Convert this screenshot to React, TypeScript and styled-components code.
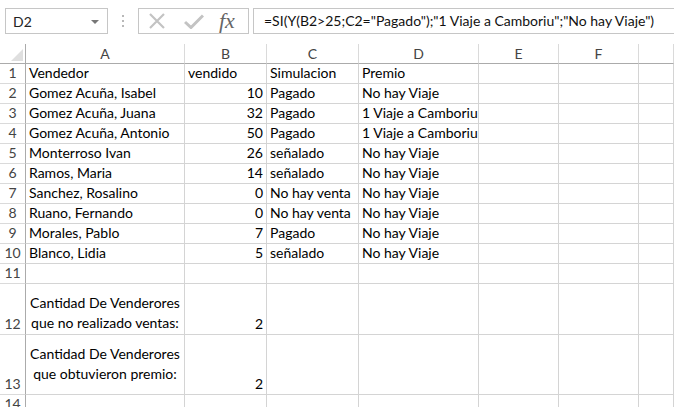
import React from 'react';
import styled, { createGlobalStyle } from 'styled-components';

const GlobalStyle = createGlobalStyle`
  html, body {
    margin: 0;
    padding: 0;
    background: #fff;
  }
  body {
    font-family: Lato, "Liberation Sans", sans-serif;
    overflow: hidden;
  }
`;

const FORMULA = '=SI(Y(B2>25;C2="Pagado");"1 Viaje a Camboriu";"No hay Viaje")';

const COLUMNS = ['A', 'B', 'C', 'D', 'E', 'F', ''];

type Row = [string, string, string, string];

const ROWS: Row[] = [
  ['Vendedor', 'vendido', 'Simulacion', 'Premio'],
  ['Gomez Acuña, Isabel', '10', 'Pagado', 'No hay Viaje'],
  ['Gomez Acuña, Juana', '32', 'Pagado', '1 Viaje a Camboriu'],
  ['Gomez Acuña, Antonio', '50', 'Pagado', '1 Viaje a Camboriu'],
  ['Monterroso Ivan', '26', 'señalado', 'No hay Viaje'],
  ['Ramos, Maria', '14', 'señalado', 'No hay Viaje'],
  ['Sanchez, Rosalino', '0', 'No hay venta', 'No hay Viaje'],
  ['Ruano, Fernando', '0', 'No hay venta', 'No hay Viaje'],
  ['Morales, Pablo', '7', 'Pagado', 'No hay Viaje'],
  ['Blanco, Lidia', '5', 'señalado', 'No hay Viaje'],
  ['', '', '', ''],
];

const SUMMARY = [
  { n: 12, label: ['Cantidad De Venderores', 'que no realizado ventas:'], value: '2', valign: 'end' as const },
  { n: 13, label: ['Cantidad De Venderores', 'que obtuvieron premio:'], value: '2', valign: 'center' as const },
];

function App() {
  return (
    <StyledPage>
      <GlobalStyle />
      <StyledFormulaBar>
        <StyledNameBox>
          <span>D2</span>
          <StyledCaret />
        </StyledNameBox>
        <StyledGrip>
          <i />
          <i />
          <i />
        </StyledGrip>
        <StyledFxGroup>
          <svg width="18" height="16" viewBox="0 0 18 16">
            <path d="M2 1 L16 15 M16 1 L2 15" stroke="#c3c3c3" strokeWidth="2.2" fill="none" />
          </svg>
          <svg width="20" height="15" viewBox="0 0 20 15">
            <path d="M1 8 L7 13.5 L19 1.5" stroke="#c3c3c3" strokeWidth="3" fill="none" />
          </svg>
          <StyledFx>fx</StyledFx>
        </StyledFxGroup>
        <StyledFormulaInput>{FORMULA}</StyledFormulaInput>
      </StyledFormulaBar>

      <StyledSheet>
        <StyledCorner>
          <svg width="12" height="12" viewBox="0 0 12 12">
            <path d="M12 0 L12 12 L0 12 Z" fill="#dfdfdf" />
          </svg>
        </StyledCorner>
        {COLUMNS.map((c, i) => (
          <StyledColHead key={i}>{c}</StyledColHead>
        ))}

        {ROWS.map((row, i) => (
          <React.Fragment key={i}>
            <StyledRowHead>{i + 1}</StyledRowHead>
            <StyledCell>{row[0]}</StyledCell>
            <StyledCell $align={i === 0 ? 'left' : 'right'}>{row[1]}</StyledCell>
            <StyledCell>{row[2]}</StyledCell>
            <StyledCell>{row[3]}</StyledCell>
            <StyledCell />
            <StyledCell />
            <StyledCell />
          </React.Fragment>
        ))}

        {SUMMARY.map((s) => (
          <React.Fragment key={s.n}>
            <StyledRowHead>{s.n}</StyledRowHead>
            <StyledCell $valign={s.valign}>
              <StyledLabel>
                {s.label.map((l) => (
                  <div key={l}>{l}</div>
                ))}
              </StyledLabel>
            </StyledCell>
            <StyledCell $align="right">{s.value}</StyledCell>
            <StyledCell />
            <StyledCell />
            <StyledCell />
            <StyledCell />
            <StyledCell />
          </React.Fragment>
        ))}

        <StyledRowHead>14</StyledRowHead>
        {COLUMNS.map((c, i) => (
          <StyledCell key={i} />
        ))}
      </StyledSheet>
    </StyledPage>
  );
}

const StyledPage = styled.div`
  width: 674px;
  height: 407px;
  overflow: hidden;
  background: #fff;
`;

const StyledFormulaBar = styled.div`
  display: flex;
  align-items: center;
  height: 34px;
  padding: 8px 0 0 5px;
  box-sizing: border-box;
`;

const StyledNameBox = styled.div`
  display: flex;
  align-items: center;
  justify-content: space-between;
  width: 103px;
  height: 26px;
  box-sizing: border-box;
  padding: 0 8px 0 7px;
  border: 1px solid #c6c6c6;
  font-size: 14px;
  color: #222;
`;

const StyledCaret = styled.span`
  width: 0;
  height: 0;
  margin-top: 1px;
  border-left: 4px solid transparent;
  border-right: 4px solid transparent;
  border-top: 4px solid #777;
`;

const StyledGrip = styled.div`
  display: flex;
  flex-direction: column;
  gap: 3px;
  margin: 0 14px 0 14px;

  i {
    width: 2px;
    height: 2px;
    background: #b8b8b8;
  }
`;

const StyledFxGroup = styled.div`
  display: flex;
  align-items: center;
  width: 111px;
  height: 26px;
  box-sizing: border-box;
  padding: 0 0 0 9px;
  gap: 16px;
  border: 1px solid #c6c6c6;

  svg:nth-child(2) {
    margin-left: 2px;
  }
`;

const StyledFx = styled.span`
  margin-left: -1px;
  font-family: 'Liberation Serif', serif;
  font-style: italic;
  font-size: 22px;
  color: #666;
  line-height: 1;
`;

const StyledFormulaInput = styled.div`
  flex: 1;
  height: 26px;
  margin-left: 4px;
  box-sizing: border-box;
  padding: 2px 0 0 10px;
  border: 1px solid #c6c6c6;
  border-right: none;
  font-size: 14px;
  line-height: 20px;
  color: #111;
  white-space: nowrap;
`;

const StyledSheet = styled.div`
  display: grid;
  grid-template-columns: 26px 159px 82px 92px 120px 80px 80px 1fr;
  grid-template-rows: repeat(12, 20px) 51px 60px 20px;
  margin-top: 10px;
  font-size: 14px;
  color: #000;
`;

const StyledCorner = styled.div`
  display: flex;
  align-items: flex-end;
  justify-content: flex-end;
  padding: 0 2px 2px 0;
  border-right: 1px solid #ababab;
  border-bottom: 1px solid #ababab;
`;

const StyledColHead = styled.div`
  display: flex;
  align-items: center;
  justify-content: center;
  border-right: 1px solid #dadada;
  border-bottom: 1px solid #ababab;
  color: #444;
`;

const StyledRowHead = styled.div`
  display: flex;
  align-items: flex-end;
  justify-content: center;
  padding-bottom: 1px;
  border-right: 1px solid #ababab;
  border-bottom: 1px solid #dadada;
  color: #444;
  line-height: 18px;
`;

const StyledCell = styled.div<{
  $align?: 'left' | 'right' | 'center';
  $valign?: 'end' | 'center';
}>`
  display: flex;
  align-items: ${({ $valign }) => ($valign === 'center' ? 'center' : 'flex-end')};
  justify-content: ${({ $align }) =>
    $align === 'right' ? 'flex-end' : $align === 'center' ? 'center' : 'flex-start'};
  padding: 0 3px 1px 3px;
  border-right: 1px solid #d4d4d4;
  border-bottom: 1px solid #d4d4d4;
  line-height: 18px;
  white-space: nowrap;
  overflow: hidden;
  min-width: 0;
`;

const StyledLabel = styled.div`
  flex: 1;
  text-align: center;
  line-height: 20px;
`;

export default App;
